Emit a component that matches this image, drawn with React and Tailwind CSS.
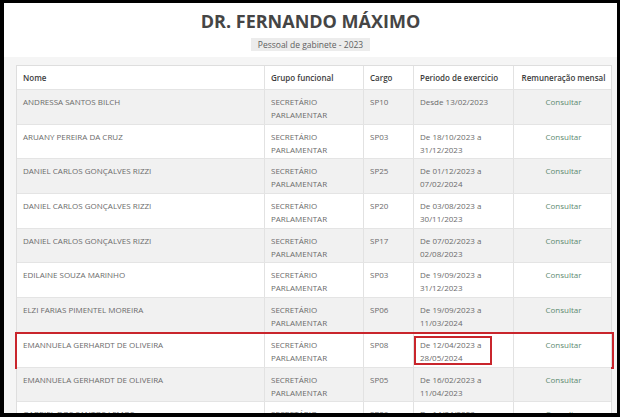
const rows = [
  { nome: 'ANDRESSA SANTOS BILCH', cargo: 'SP10', periodo: ['Desde 13/02/2023'] },
  { nome: 'ARUANY PEREIRA DA CRUZ', cargo: 'SP03', periodo: ['De 18/10/2023 a', '31/12/2023'] },
  { nome: 'DANIEL CARLOS GONÇALVES RIZZI', cargo: 'SP25', periodo: ['De 01/12/2023 a', '07/02/2024'] },
  { nome: 'DANIEL CARLOS GONÇALVES RIZZI', cargo: 'SP20', periodo: ['De 03/08/2023 a', '30/11/2023'] },
  { nome: 'DANIEL CARLOS GONÇALVES RIZZI', cargo: 'SP17', periodo: ['De 07/02/2023 a', '02/08/2023'] },
  { nome: 'EDILAINE SOUZA MARINHO', cargo: 'SP03', periodo: ['De 19/09/2023 a', '31/12/2023'] },
  { nome: 'ELZI FARIAS PIMENTEL MOREIRA', cargo: 'SP06', periodo: ['De 19/09/2023 a', '11/03/2024'] },
  { nome: 'EMANNUELA GERHARDT DE OLIVEIRA', cargo: 'SP08', periodo: ['De 12/04/2023 a', '28/05/2024'], marked: true },
  { nome: 'EMANNUELA GERHARDT DE OLIVEIRA', cargo: 'SP05', periodo: ['De 16/02/2023 a', '11/04/2023'] },
  { nome: 'GABRIEL DOS SANTOS LEMOS', cargo: 'SP06', periodo: ['De 14/04/2023 a', '30/06/2023'] },
];

const cols = 'grid grid-cols-[248px_99px_50px_100px_99px]';

function Row({ row, index }) {
  const bg = index % 2 === 0 ? 'bg-[#f1f1f1]' : 'bg-white';
  const cell = 'border-r border-[#e2e2e2] pl-[6px] pt-[5px]';
  return (
    <div className={`relative ${cols} ${bg} h-[34.7px] border-t border-[#e4e4e4] text-[8px] leading-[13px] text-[#6b6b6b]`}>
      <div className={cell}>{row.nome}</div>
      <div className={cell}>
        <div>SECRETÁRIO</div>
        <div>PARLAMENTAR</div>
      </div>
      <div className={cell}>{row.cargo}</div>
      <div className={`${cell} relative`}>
        {row.periodo.map((p) => (
          <div key={p}>{p}</div>
        ))}
        {row.marked && (
          <div className="absolute left-0 right-[21px] top-[3px] bottom-[2px] border-2 border-[#c9252c]" />
        )}
      </div>
      <div className="pt-[5px] text-center text-[#5e8a70]">Consultar</div>
      {row.marked && (
        <div className="absolute left-[-2px] right-[-3px] top-[-1px] bottom-[-2px] border-2 border-[#c9252c]" />
      )}
    </div>
  );
}

export default function App() {
  return (
    <div className="w-[623px] h-[420px] bg-white" style={{ fontFamily: '"Open Sans", sans-serif' }}>
      <div className="w-[620px] h-[417px] border-l-4 border-t-[3px] border-r-[3px] border-b-4 border-black overflow-hidden flex flex-col">
        <div className="h-[54px] bg-white flex flex-col items-center shrink-0">
          <h1 className="mt-[6px] text-[18px] leading-[24px] font-bold text-[#454545]">
            DR. FERNANDO MÁXIMO
          </h1>
          <div className="mt-[5px] bg-[#ececec] px-[7px] text-[8.5px] leading-[13px] text-[#606060]">
            Pessoal de gabinete - 2023
          </div>
        </div>
        <div className="flex-1 bg-[#f5f5f5] pt-[8px] pl-[12px] pr-[5px]">
          <div className="bg-white border border-[#dedede]">
            <div className={`${cols} h-[23px] items-center text-[8px] font-semibold text-[#3d3d3d]`}>
              <div className="pl-[6px] h-full flex items-center border-r border-[#e2e2e2]">Nome</div>
              <div className="pl-[6px] h-full flex items-center border-r border-[#e2e2e2]">Grupo funcional</div>
              <div className="pl-[6px] h-full flex items-center border-r border-[#e2e2e2]">Cargo</div>
              <div className="pl-[6px] h-full flex items-center border-r border-[#e2e2e2]">Periodo de exercicio</div>
              <div className="h-full flex items-center justify-center">Remuneração mensal</div>
            </div>
            {rows.map((row, i) => (
              <Row key={i} row={row} index={i} />
            ))}
          </div>
        </div>
      </div>
    </div>
  );
}
